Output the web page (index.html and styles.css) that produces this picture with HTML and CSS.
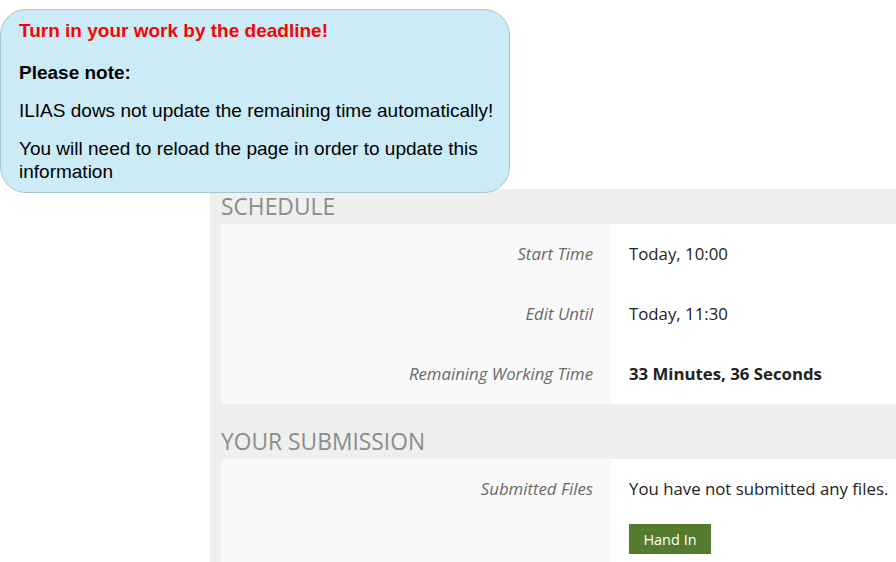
FILE: index.html
```html
<!DOCTYPE html>
<html>
<head>
<meta charset="utf-8">
<link rel="stylesheet" href="styles.css">
</head>
<body>
<div class="page">
  <div class="panel">
    <section class="sec">
      <h2 class="sec-title">SCHEDULE</h2>
      <div class="table">
        <div class="row">
          <div class="lbl">Start Time</div>
          <div class="val">Today, 10:00</div>
        </div>
        <div class="row">
          <div class="lbl">Edit Until</div>
          <div class="val">Today, 11:30</div>
        </div>
        <div class="row">
          <div class="lbl">Remaining Working Time</div>
          <div class="val strong">33 Minutes, 36 Seconds</div>
        </div>
      </div>
    </section>
    <section class="sec">
      <h2 class="sec-title">YOUR SUBMISSION</h2>
      <div class="table">
        <div class="row top">
          <div class="lbl">Submitted Files</div>
          <div class="val">
            <div>You have not submitted any files.</div>
            <button class="btn">Hand In</button>
          </div>
        </div>
      </div>
    </section>
  </div>
</div>
<div class="bubble">
  <p class="warn">Turn in your work by the deadline!</p>
  <p class="note">Please note:</p>
  <p>ILIAS dows not update the remaining time automatically!</p>
  <p>You will need to reload the page in order to update this information</p>
</div>
</body>
</html>
```
FILE: styles.css
```css
html, body {
  margin: 0;
  padding: 0;
  background: #fff;
  overflow: hidden;
}
body {
  width: 896px;
  height: 562px;
  position: relative;
  font-family: "Open Sans", sans-serif;
}
.page {
  padding: 189px 0 0 210px;
}
.panel {
  background: #efefef;
  padding: 0 0 0 11px;
  width: 700px;
}
.sec-title {
  margin: 0;
  height: 35px;
  line-height: 35px;
  font-size: 22.8px;
  font-weight: 400;
  color: #8c8c8c;
}
.sec + .sec .sec-title {
  padding-top: 20px;
}
.table {
  background: #fff;
}
.row {
  display: flex;
  height: 60px;
}
.lbl {
  flex: 0 0 390px;
  box-sizing: border-box;
  padding-right: 18px;
  padding-bottom: 1px;
  font-style: italic;
  font-size: 16.8px;
  color: #6a6a6a;
  background: #f9f9f9;
  display: flex;
  align-items: center;
  justify-content: flex-end;
}
.val {
  padding-left: 18px;
  padding-bottom: 1px;
  font-size: 16.8px;
  color: #222;
  display: flex;
  align-items: center;
}
.row.top {
  height: 110px;
}
.row.top .lbl {
  align-items: flex-start;
  padding-top: 18px;
}
.row.top .val {
  display: block;
  padding-top: 18px;
}
.val.strong {
  font-weight: 700;
}
.btn {
  display: block;
  margin-top: 24px;
  background: #557b2e;
  color: #fff;
  border: none;
  font-family: "Open Sans", sans-serif;
  font-size: 14.5px;
  height: 30px;
  width: 82px;
  padding: 0;
}
.bubble {
  position: absolute;
  left: 0;
  top: 9px;
  width: 510px;
  height: 184px;
  box-sizing: border-box;
  background: #cbecf7;
  border: 1px solid #a8c6d0;
  border-radius: 26px;
  padding: 9px 8px 9px 18px;
  font-family: "Liberation Sans", Arial, sans-serif;
  font-size: 19px;
  line-height: 23px;
  color: #000;
}
.bubble p {
  margin: 0 0 15px;
}
.bubble .warn {
  color: #ff0000;
  font-weight: 700;
  margin-bottom: 19px;
}
.bubble .note {
  font-weight: 700;
}
```
